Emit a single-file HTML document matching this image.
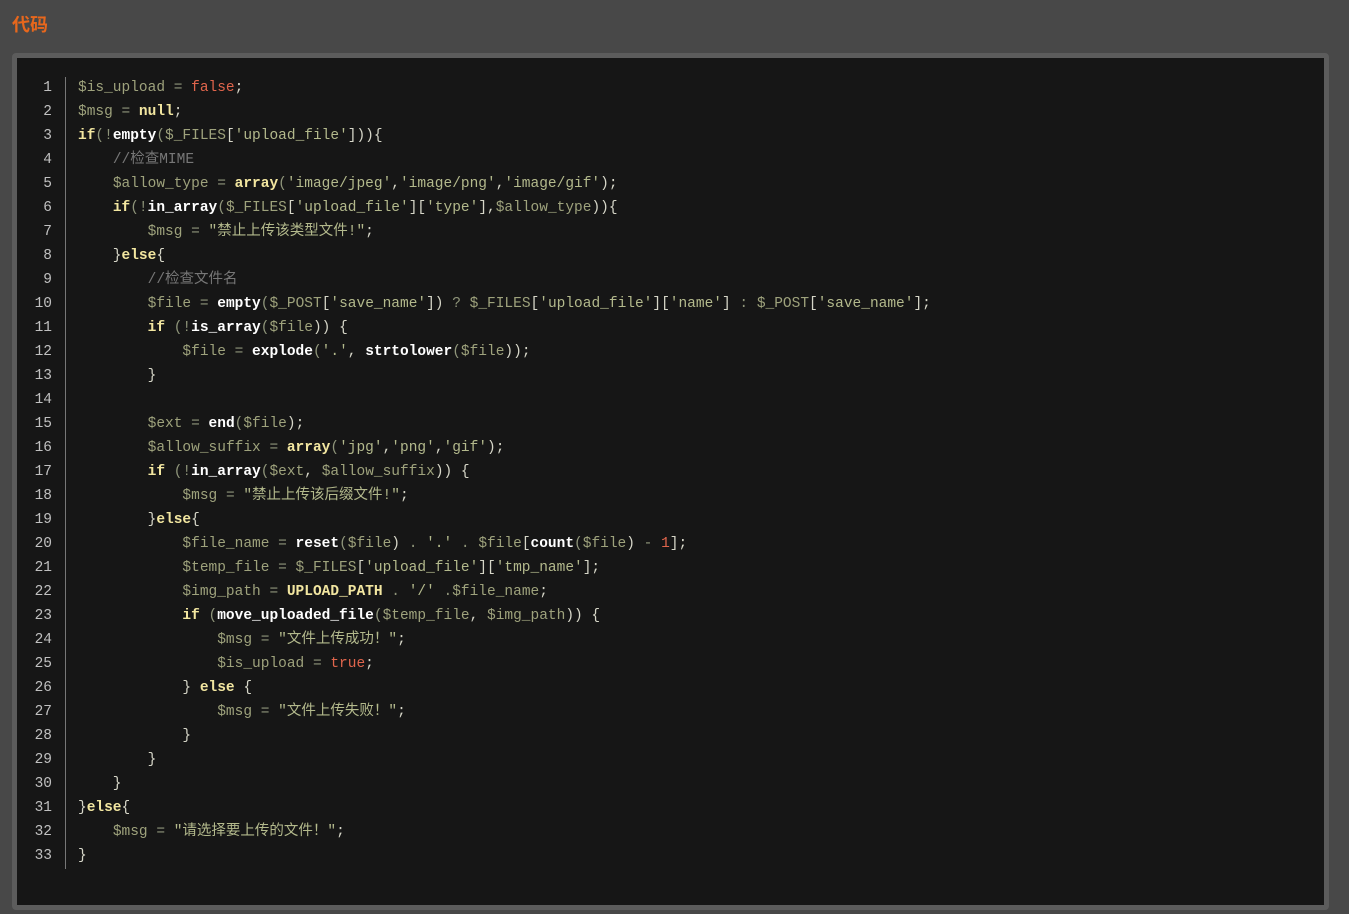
<!DOCTYPE html>
<html><head><meta charset="utf-8"><style>
body{margin:0;background:#484848;width:1349px;height:914px;overflow:hidden;font-family:"Liberation Sans","Noto Sans CJK SC",sans-serif}
h3{position:absolute;left:12px;top:11px;margin:0;color:#e8671c;font-size:18px;font-weight:bold}
.box{position:absolute;left:12px;top:53px;width:1307px;height:847px;border:5px solid #5c5c5c;border-radius:4px;background:#161616}
.nums{position:absolute;left:0;top:18px;width:35px;text-align:right;color:#c0c0c0;font:14.5px/24px "Liberation Mono","Noto Sans CJK SC",monospace}
.sep{position:absolute;left:48px;top:19px;width:1px;height:792px;background:#777}
pre{position:absolute;left:61px;top:18px;margin:0;font:14.5px/24px "Liberation Mono","Noto Sans CJK SC",monospace;color:#d6d6c8}
.v{color:#9ea27c}.f{color:#fff;font-weight:bold}.k{color:#f2e6a0;font-weight:bold}.s{color:#b3b98c}.c{color:#777}.r{color:#e0654c}.o{color:#8f957a}
</style></head><body>
<h3>代码</h3>
<div class="box">
<div class="nums">1<br>2<br>3<br>4<br>5<br>6<br>7<br>8<br>9<br>10<br>11<br>12<br>13<br>14<br>15<br>16<br>17<br>18<br>19<br>20<br>21<br>22<br>23<br>24<br>25<br>26<br>27<br>28<br>29<br>30<br>31<br>32<br>33</div>
<div class="sep"></div>
<pre><span class="v">$is_upload</span> <span class="o">=</span> <span class="r">false</span>;
<span class="v">$msg</span> <span class="o">=</span> <span class="k">null</span>;
<span class="k">if</span><span class="o">(!</span><span class="f">empty</span><span class="o">(</span><span class="v">$_FILES</span>[<span class="s">'upload_file'</span>])){
    <span class="c">//检查MIME</span>
    <span class="v">$allow_type</span> <span class="o">=</span> <span class="k">array</span><span class="o">(</span><span class="s">'image/jpeg'</span>,<span class="s">'image/png'</span>,<span class="s">'image/gif'</span>);
    <span class="k">if</span><span class="o">(!</span><span class="f">in_array</span><span class="o">(</span><span class="v">$_FILES</span>[<span class="s">'upload_file'</span>][<span class="s">'type'</span>],<span class="v">$allow_type</span>)){
        <span class="v">$msg</span> <span class="o">=</span> <span class="s">"禁止上传该类型文件!"</span>;
    }<span class="k">else</span>{
        <span class="c">//检查文件名</span>
        <span class="v">$file</span> <span class="o">=</span> <span class="f">empty</span><span class="o">(</span><span class="v">$_POST</span>[<span class="s">'save_name'</span>]) <span class="o">?</span> <span class="v">$_FILES</span>[<span class="s">'upload_file'</span>][<span class="s">'name'</span>] <span class="o">:</span> <span class="v">$_POST</span>[<span class="s">'save_name'</span>];
        <span class="k">if</span> <span class="o">(!</span><span class="f">is_array</span><span class="o">(</span><span class="v">$file</span>)) {
            <span class="v">$file</span> <span class="o">=</span> <span class="f">explode</span><span class="o">(</span><span class="s">'.'</span>, <span class="f">strtolower</span><span class="o">(</span><span class="v">$file</span>));
        }

        <span class="v">$ext</span> <span class="o">=</span> <span class="f">end</span><span class="o">(</span><span class="v">$file</span>);
        <span class="v">$allow_suffix</span> <span class="o">=</span> <span class="k">array</span><span class="o">(</span><span class="s">'jpg'</span>,<span class="s">'png'</span>,<span class="s">'gif'</span>);
        <span class="k">if</span> <span class="o">(!</span><span class="f">in_array</span><span class="o">(</span><span class="v">$ext</span>, <span class="v">$allow_suffix</span>)) {
            <span class="v">$msg</span> <span class="o">=</span> <span class="s">"禁止上传该后缀文件!"</span>;
        }<span class="k">else</span>{
            <span class="v">$file_name</span> <span class="o">=</span> <span class="f">reset</span><span class="o">(</span><span class="v">$file</span>) <span class="o">.</span> <span class="s">'.'</span> <span class="o">.</span> <span class="v">$file</span>[<span class="f">count</span><span class="o">(</span><span class="v">$file</span>) <span class="o">-</span> <span class="r">1</span>];
            <span class="v">$temp_file</span> <span class="o">=</span> <span class="v">$_FILES</span>[<span class="s">'upload_file'</span>][<span class="s">'tmp_name'</span>];
            <span class="v">$img_path</span> <span class="o">=</span> <span class="k">UPLOAD_PATH</span> <span class="o">.</span> <span class="s">'/'</span> <span class="o">.</span><span class="v">$file_name</span>;
            <span class="k">if</span> <span class="o">(</span><span class="f">move_uploaded_file</span><span class="o">(</span><span class="v">$temp_file</span>, <span class="v">$img_path</span>)) {
                <span class="v">$msg</span> <span class="o">=</span> <span class="s">"文件上传成功！"</span>;
                <span class="v">$is_upload</span> <span class="o">=</span> <span class="r">true</span>;
            } <span class="k">else</span> {
                <span class="v">$msg</span> <span class="o">=</span> <span class="s">"文件上传失败！"</span>;
            }
        }
    }
}<span class="k">else</span>{
    <span class="v">$msg</span> <span class="o">=</span> <span class="s">"请选择要上传的文件！"</span>;
}</pre>
</div>
</body></html>
